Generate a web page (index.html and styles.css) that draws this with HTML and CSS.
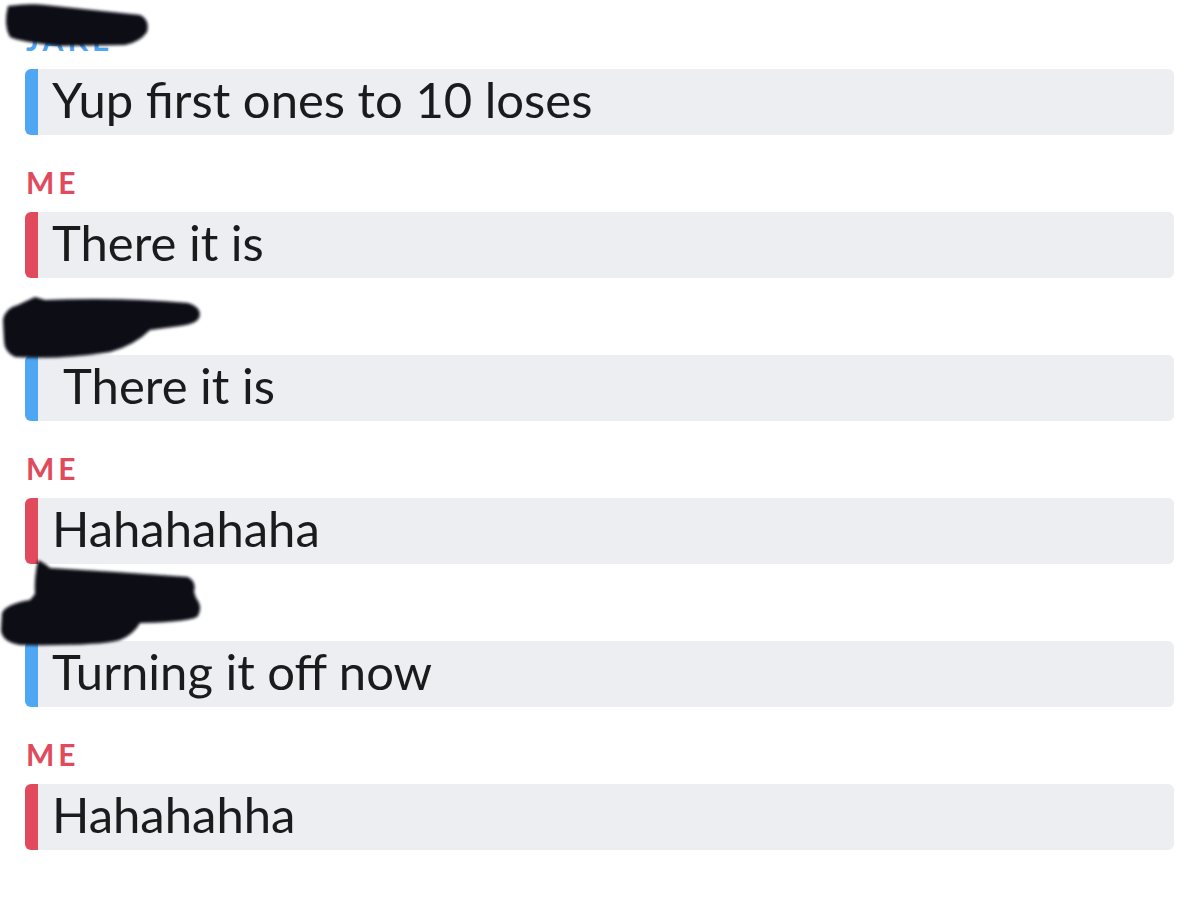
FILE: index.html
```html
<!DOCTYPE html>
<html lang="en">
<head>
<meta charset="utf-8">
<title>Chat</title>
<link rel="stylesheet" href="styles.css">
</head>
<body>
<main class="chat">
  <section class="group them">
    <div class="label">JAKE
      <svg class="scribble s1" width="160" height="60" viewBox="0 0 160 60"><defs><filter id="b1"><feGaussianBlur stdDeviation="1.5"/></filter></defs><path filter="url(#b1)" d="M8 6 Q30 3 45 5 L140 15 Q150 20 147 32 Q140 42 125 45 L60 46 Q20 42 10 37 Q3 25 8 6 Z"/></svg>
    </div>
    <div class="bubble"><span class="text">Yup first ones to 10 loses</span></div>
  </section>
  <section class="group me">
    <div class="label">ME</div>
    <div class="bubble"><span class="text">There it is</span></div>
  </section>
  <section class="group them">
    <div class="label">JAKE
      <svg class="scribble s2" width="210" height="70" viewBox="0 0 210 70"><defs><filter id="b2"><feGaussianBlur stdDeviation="1.6"/></filter></defs><path filter="url(#b2)" d="M35 2 L45 5 Q120 2 188 8 Q203 13 199 23 Q196 29 180 31 L150 35 Q135 50 110 57 Q60 65 15 62 Q4 57 4 45 L3 25 Q5 13 18 10 Z"/></svg>
    </div>
    <div class="bubble"><span class="text"> There it is</span></div>
  </section>
  <section class="group me">
    <div class="label">ME</div>
    <div class="bubble"><span class="text">Hahahahaha</span></div>
  </section>
  <section class="group them">
    <div class="label">JAKE
      <svg class="scribble s3" width="210" height="95" viewBox="0 0 210 95"><defs><filter id="b3"><feGaussianBlur stdDeviation="1.6"/></filter></defs><path filter="url(#b3)" d="M38 2 Q46 6 50 10 Q120 14 188 19 Q197 24 194 34 L196 40 Q203 48 198 58 Q192 64 140 65 Q134 76 120 82 Q100 88 20 87 Q2 84 1 72 L2 55 Q6 46 30 42 L35 36 Q34 20 38 2 Z"/></svg>
    </div>
    <div class="bubble"><span class="text">Turning it off now</span></div>
  </section>
  <section class="group me">
    <div class="label">ME</div>
    <div class="bubble"><span class="text">Hahahahha</span></div>
  </section>
</main>
</body>
</html>
```

FILE: styles.css
```css
html, body {
  margin: 0;
  padding: 0;
  background: #ffffff;
}

body {
  font-family: "Lato", "Noto Sans", sans-serif;
  color: #1b1b1d;
}

.chat {
  display: flex;
  flex-direction: column;
  gap: 27px;
  padding: 19px 26px 0 25px;
}

.group {
  display: flex;
  flex-direction: column;
  gap: 10px;
}

.label {
  position: relative;
  font-size: 30px;
  line-height: 40px;
  height: 40px;
  font-weight: 700;
  letter-spacing: 4px;
  padding-left: 1px;
}

.them .label { color: #4fa6f2; }
.me .label { color: #e04a5c; }

.scribble {
  position: absolute;
  left: -25px;
  fill: #0a0a12;
}

.s1 { top: -19px; }
.s2 { top: -10px; }
.s3 { top: -33px; }

.bubble {
  display: flex;
  align-items: flex-start;
  height: 66px;
  background: #edeef1;
  border-radius: 6px;
  border-left: 13px solid #4fa6f2;
  box-sizing: border-box;
  padding-left: 14px;
}

.me .bubble { border-left-color: #e04a5c; }

.text {
  font-size: 49px;
  line-height: 60px;
  white-space: pre;
  color: #1b1b1d;
}
```
